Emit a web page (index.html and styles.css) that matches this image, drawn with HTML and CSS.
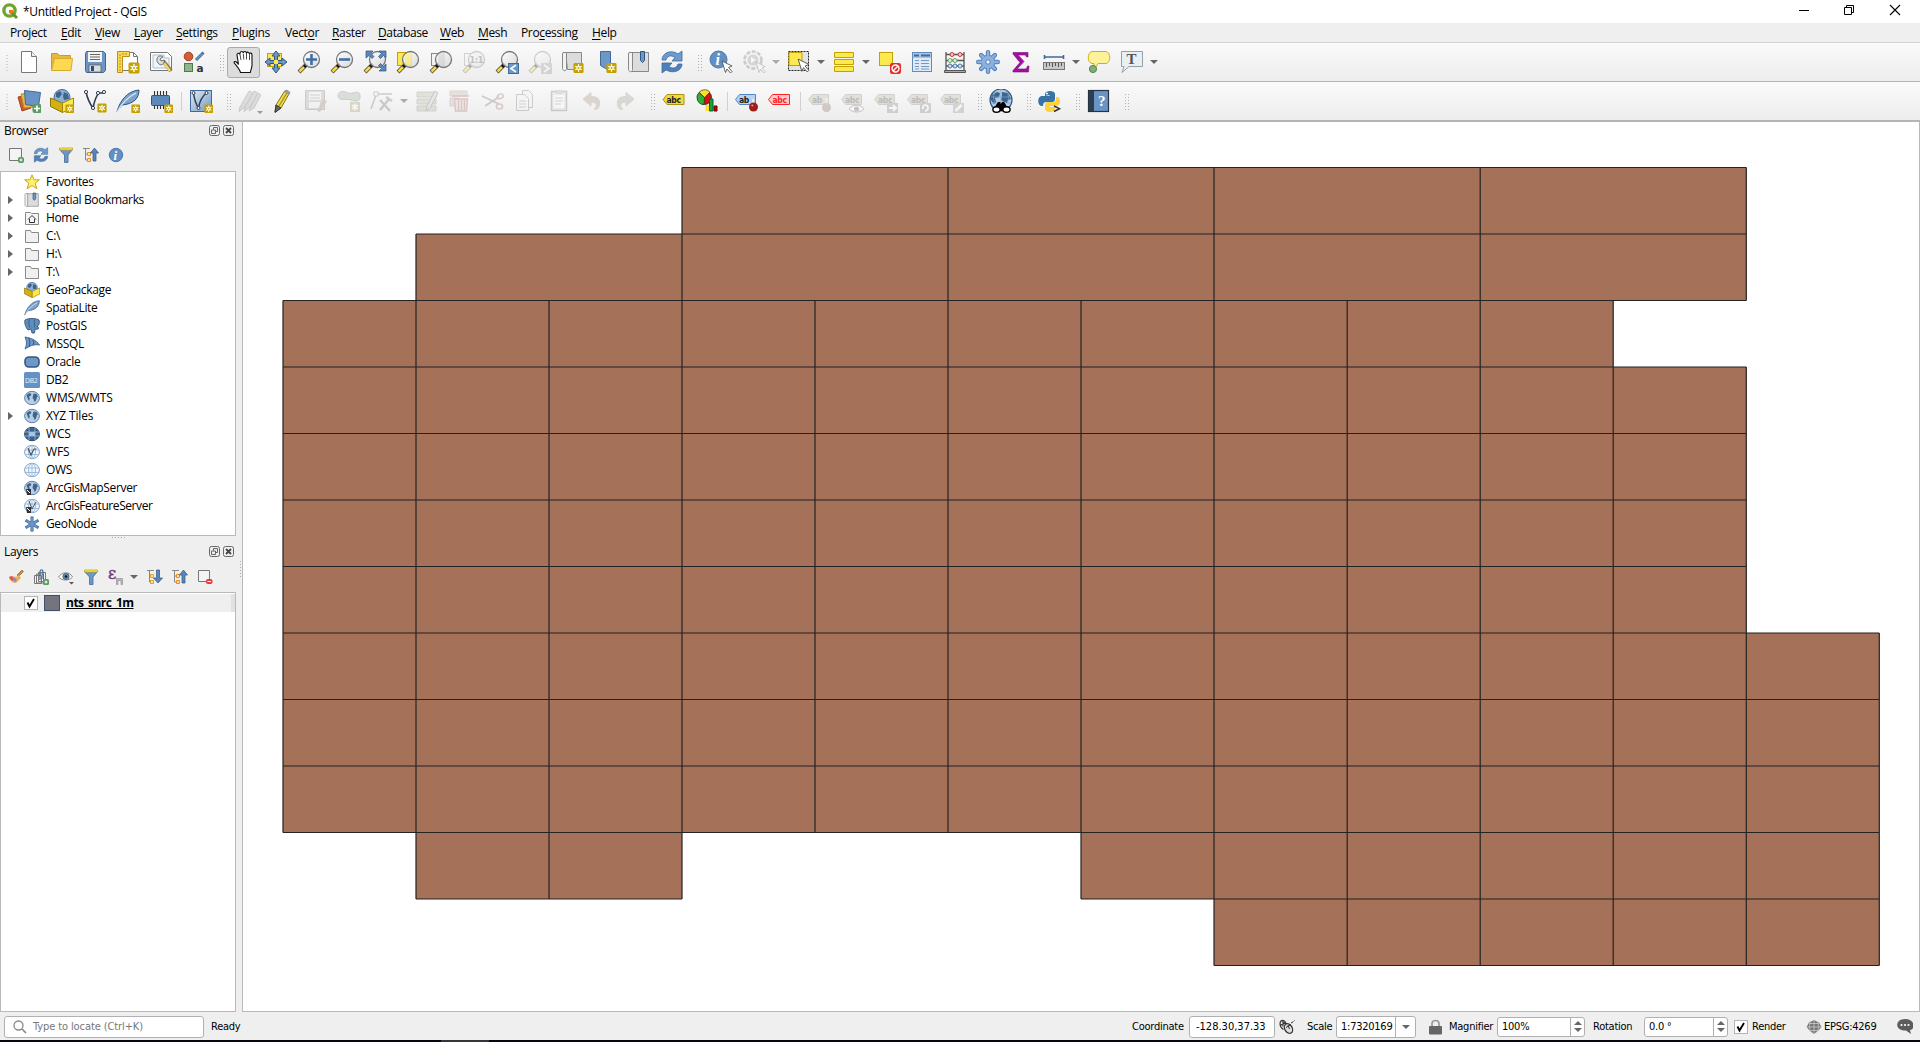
FILE: index.html
```html
<!DOCTYPE html>
<html lang="en">
<head>
<meta charset="utf-8">
<title>*Untitled Project - QGIS</title>
<link rel="stylesheet" href="styles.css">
</head>
<body>
<svg class="defs" width="0" height="0">
  <defs>
    <linearGradient id="gGlass" x1="0" y1="0" x2="1" y2="1"><stop offset="0" stop-color="#fff"/><stop offset="1" stop-color="#d4d6d4"/></linearGradient>
    <linearGradient id="gBlue" x1="0" y1="0" x2="1" y2="1"><stop offset="0" stop-color="#e4edf5"/><stop offset="1" stop-color="#6d97c4"/></linearGradient>
  </defs>
  <symbol id="star" viewBox="0 0 12 12"><rect x=".5" y=".5" width="11" height="11" rx="1.500" fill="#c4a000"/><path d="M6 2v8M2.500 4l7 4M9.500 4l-7 4" stroke="#fff" stroke-width="1.300"/><circle cx="6" cy="6" r="2.200" fill="#fff"/><circle cx="6" cy="6" r="1" fill="#c4a000"/></symbol>
  <symbol id="lens" viewBox="0 0 24 24"><path d="M2 22l7-7" stroke="#444" stroke-width="4"/><path d="M2.500 21.500l5-5" stroke="#fcd93a" stroke-width="2.500"/><path d="M7 17l3-3" stroke="#111" stroke-width="3"/><circle cx="14.500" cy="9.500" r="8" fill="url(#gGlass)" fill-opacity=".85" stroke="#777" stroke-width="1.300"/></symbol>
  <symbol id="new" viewBox="0 0 24 24"><path d="M4.500 1.500h10l5 5v16h-15z" fill="#fff" stroke="#777"/><path d="M14.500 1.500v5h5" fill="#eee" stroke="#777"/></symbol>
  <symbol id="open" viewBox="0 0 24 24"><path d="M1.500 20.500v-17h6l2 2h11v5" fill="#e8b73c" stroke="#c79b2c"/><path d="M1.500 20.500l3-12h18l-1.500 12z" fill="#fcd94e" stroke="#d8ab32"/></symbol>
  <symbol id="save" viewBox="0 0 24 24"><path d="M3.500 1.500h17l2 2v17l-2 2h-17l-1-2v-17z" fill="#6b96c5" stroke="#3f6797"/><rect x="5" y="2" width="14" height="10" fill="#f4f4f4"/><path d="M7 4.500h10M7 7h10M7 9.500h10" stroke="#666"/><rect x="6" y="15" width="12" height="7" fill="#ddd" stroke="#555" stroke-width=".7"/><rect x="8" y="16" width="3" height="5" fill="#446"/></symbol>
  <symbol id="layout" viewBox="0 0 24 24"><path d="M6.500 2.500h11l4 4v14h-15z" fill="#fff" stroke="#777"/><path d="M17.500 2.500v4h4" fill="none" stroke="#777"/><path d="M1.500 1.500h12v5h-7v16h-5z" fill="#fcd94e" stroke="#b98f1e"/><path d="M3 5h2M3 8h2M3 11h2M3 14h2M3 17h2M3 20h2M7 3v2M10 3v2" stroke="#b98f1e"/><use href="#star" x="12" y="12" width="12" height="12"/></symbol>
  <symbol id="layoutmgr" viewBox="0 0 24 24"><path d="M1.500 2.500h17l4 4v14h-21z" fill="#fff" stroke="#777"/><path d="M4 5h11v3h5v10H4z" fill="#eef4fa" stroke="#a5bfd8"/><path d="M14 11l8 10" stroke="#8a7a30" stroke-width="4"/><path d="M15 13l6 8" stroke="#f2d675" stroke-width="2.500"/><path d="M8 9c0-3 4-4 6-2l-3 2 1 2 3-1c1 4-3 6-5 4s-2-2-2-5z" fill="#ddd" stroke="#555" stroke-width=".8"/></symbol>
  <symbol id="style" viewBox="0 0 24 24"><circle cx="6.500" cy="6.500" r="4.300" fill="#d45c36" stroke="#9a4021"/><path d="M14 10l7.500-7.500" stroke="#41699b" stroke-width="3"/><path d="M14.500 9.500l6-6" stroke="#6d97c4" stroke-width="1.400"/><rect x="2.500" y="13.500" width="8" height="8" fill="#8fb38c" stroke="#4a7c46"/><text x="14.500" y="21.500" font-size="10.500" font-family="DejaVu Sans" fill="#333">a</text></symbol>
  <symbol id="hand" viewBox="0 0 24 24"><path d="M9.500 22.500c-1-4-5.500-8-6.500-10 .5-2 3-.5 4.500 2L6 5c0-2 2-2.500 3-.5V3c.5-2 3-2 3.300 0 .3-2 2.700-2 3.200 0 .5-1.500 2.500-1 3 .8.500-1.200 2.500-1 2.500 1.200V15c0 3-1 4-1.700 7.500z" fill="#fff" stroke="#111" stroke-width="1.100"/><path d="M9 4.500l1 5.500M12.300 3.500l.5 6M15.500 4v5.500M18.500 5v5" stroke="#333" stroke-width=".9"/></symbol>
  <symbol id="pansel" viewBox="0 0 24 24"><rect x="3.500" y="3.500" width="14" height="13" fill="#fce94f" stroke="#c4a000"/><path d="M12 1l4 5h-2.500v4.500H18V8l5 4-5 4v-2.500h-4.500V18H16l-4 5-4-5h2.500v-4.500H6V16l-5-4 5-4v2.500h4.500V6H8z" fill="#6d97c4" stroke="#2f5582"/><rect x="10" y="10" width="4" height="4" fill="#fce94f"/></symbol>
  <symbol id="zin" viewBox="0 0 24 24"><use href="#lens"/><path d="M14.500 4v11M9 9.500h11" stroke="#3f6ea8" stroke-width="2.600"/></symbol>
  <symbol id="zout" viewBox="0 0 24 24"><use href="#lens"/><path d="M9 9.500h11" stroke="#3f6ea8" stroke-width="2.600"/></symbol>
  <symbol id="zfull" viewBox="0 0 24 24"><use href="#lens"/><g fill="#5b87b8" stroke="#2f5582" stroke-width=".7"><path d="M3 1h7L8 3.500l3 3-2 2-3-3L3 8z"/><path d="M23 1v7l-2.500-2.500-3 3-2-2 3-3L16 1z"/><path d="M23 21h-7l2.500-2.500-3-3 2-2 3 3L23 14z"/></g></symbol>
  <symbol id="zsel" viewBox="0 0 24 24"><rect x="1.500" y="2.500" width="14" height="13" fill="#fce94f" stroke="#c4a000"/><use href="#lens"/><path d="M9 4h6v11H9z" fill="#fce94f" opacity=".45"/></symbol>
  <symbol id="zlay" viewBox="0 0 24 24"><rect x="2.500" y="3.500" width="13" height="12" fill="#f3f3f3" stroke="#888"/><use href="#lens"/><path d="M9 4h6v11H9z" fill="#ccc" opacity=".5"/></symbol>
  <symbol id="znat" viewBox="0 0 24 24"><rect x="2.500" y="3.500" width="13" height="12" fill="#f3f3f3" stroke="#888"/><use href="#lens"/><text x="7.500" y="13" font-size="9" font-weight="bold" font-family="DejaVu Sans Condensed" fill="#555">1:1</text></symbol>
  <symbol id="zlast" viewBox="0 0 24 24"><use href="#lens"/><rect x="13.500" y="13.500" width="10" height="10" fill="#6d97c4" stroke="#41699b"/><path d="M21 15l-5 3.500 5 3.500" fill="none" stroke="#fff" stroke-width="1.600"/></symbol>
  <symbol id="znext" viewBox="0 0 24 24"><use href="#lens"/><rect x="13" y="13" width="11" height="11" fill="#999"/><path d="M16 15l5 3.500-5 3.500" fill="none" stroke="#fff" stroke-width="1.600"/></symbol>
  <symbol id="newview" viewBox="0 0 24 24"><path d="M4.500 2.500h16v17h-14z" fill="#dcdcdc" stroke="#888"/><path d="M2 2.500h3.500v16c0 3-3.500 3-4 0V4z" fill="#f2f2f2" stroke="#888"/><use href="#star" x="12" y="12.500" width="11" height="11"/></symbol>
  <symbol id="newbm" viewBox="0 0 24 24"><path d="M6.500 1.500h10v20l-5-3-5-3z" fill="#6d97c4" stroke="#41699b"/><use href="#star" x="12" y="12.500" width="11" height="11"/></symbol>
  <symbol id="bm" viewBox="0 0 24 24"><path d="M4.500 2.500h17v19h-17z" fill="#dcdcdc" stroke="#888"/><path d="M2 2.500h3.500v17c0 3-3.500 3-4 0V4z" fill="#f2f2f2" stroke="#888"/><path d="M13.500 1.500h4v9l-2 2-2-2z" fill="#6d97c4" stroke="#2f5582"/></symbol>
  <symbol id="refresh" viewBox="0 0 24 24"><path d="M2 10C2 3 11-1 18 4l4-3v10H12l3-3.500C11 4.500 7 6 6 10z" fill="#6d9bd0" stroke="#41699b" stroke-width=".8"/><path d="M22 14c0 7-9 10-16 6l-4 3V13h10l-3 3.500c4 3 8 1 9-2.500z" fill="#4e80ba" stroke="#41699b" stroke-width=".8"/></symbol>
  <symbol id="cursor" viewBox="0 0 12 14"><path d="M1 1l10 5-3.500 1.500 3.500 4-1.500 1.500-3.500-4-1.500 3.500z" fill="#fff" stroke="#555" stroke-width=".9"/></symbol>
  <symbol id="ident" viewBox="0 0 24 24"><circle cx="9.500" cy="9.500" r="8.500" fill="#6290c4" stroke="#4a78ab"/><text x="6.500" y="15" font-size="16" font-weight="bold" font-style="italic" font-family="Liberation Serif" fill="#fff">i</text><use href="#cursor" x="12" y="10" width="12" height="14"/></symbol>
  <symbol id="action" viewBox="0 0 24 24"><circle cx="11" cy="10" r="8.500" fill="#eee" stroke="#777" stroke-width="2.500" stroke-dasharray="4 1.500"/><circle cx="11" cy="10" r="5.500" fill="#999"/><path d="M9 7l5 3-5 3z" fill="#fff"/><use href="#cursor" x="13" y="11" width="11" height="13"/></symbol>
  <symbol id="select" viewBox="0 0 24 24"><rect x="1.500" y="1.500" width="20" height="19" fill="#e4e4e4" stroke="#222" stroke-dasharray="2 1"/><path d="M2 2.500h13v13H2z" fill="#fce94f" stroke="#c4a000"/><use href="#cursor" x="10" y="8" width="13" height="15"/></symbol>
  <symbol id="selform" viewBox="0 0 24 24"><path d="M2.500 2.500h19v5h-19zM2.500 9.500h19v5h-19zM2.500 16.500h19v5h-19z" fill="#fce94f" stroke="#c4a000"/></symbol>
  <symbol id="desel" viewBox="0 0 24 24"><rect x="2.500" y="2.500" width="13" height="13" fill="#fce94f" stroke="#c4a000"/><rect x="13" y="13" width="11" height="11" rx="2" fill="#e02f2f"/><circle cx="18.500" cy="18.500" r="3.500" fill="none" stroke="#fff" stroke-width="1.400"/><path d="M16 21l5-5" stroke="#fff" stroke-width="1.400"/></symbol>
  <symbol id="table" viewBox="0 0 24 24"><rect x="2.500" y="2.500" width="19" height="19" fill="#dfeaf5" stroke="#5f8cbc"/><path d="M3 3h18v5H3z" fill="#a9c5e2"/><path d="M4 5.500h5M11 5.500h9" stroke="#41699b" stroke-width="2"/><path d="M5 10.500h4M5 13.500h4M5 16.500h4M5 19h4M11 10.500h8M11 13.500h8M11 16.500h8M11 19h8" stroke="#7199c4"/></symbol>
  <symbol id="abacus" viewBox="0 0 24 24"><path d="M3 2v18M21 2v18M3 4.500h18M3 10.500h18M3 16h18" stroke="#555" stroke-width="1.300"/><path d="M1.500 20.500h21v2h-21z" fill="#aaa" stroke="#555"/><g fill="#f3c4c4" stroke="#c93434"><circle cx="9" cy="4.500" r="2"/><circle cx="17" cy="4.500" r="2"/></g><g fill="#dff0df" stroke="#66a366"><circle cx="7" cy="10.500" r="2"/><circle cx="12" cy="10.500" r="2"/></g><g fill="#cfe0f2" stroke="#4a78ab"><circle cx="7" cy="16" r="2"/><circle cx="12" cy="16" r="2"/><circle cx="17" cy="16" r="2"/></g></symbol>
  <symbol id="gear" viewBox="0 0 24 24"><path d="M12 2.200v19.600M2.200 12h19.600M5.100 5.100l13.800 13.800M18.900 5.100L5.100 18.900" stroke="#4a7fbe" stroke-width="4.400" stroke-linecap="round"/><circle cx="12" cy="12" r="6.800" fill="#8db1dc" stroke="#4a7fbe"/><path d="M12 2.200v19.600M2.200 12h19.600M5.100 5.100l13.800 13.800M18.900 5.100L5.100 18.900" stroke="#8db1dc" stroke-width="2.500" stroke-linecap="round"/><circle cx="12" cy="12" r="2.200" fill="#f4f4f4" stroke="#4a7fbe"/></symbol>
  <symbol id="sigma" viewBox="0 0 24 24"><path d="M4 2.500h15v4.500h-1.500c-.5-2-1-2-3-2H9l6 6.500-7 7.500h7c2 0 3-.5 3.500-3H20l-.5 6H4v-1.500l7-8L4 4z" fill="#a3109f" stroke="#7b0a78" stroke-width=".6"/></symbol>
  <symbol id="measure" viewBox="0 0 24 24"><path d="M2 7h20M2.500 5v4M21.500 5v4" stroke="#41699b" stroke-width="1.600"/><rect x="1.500" y="12.500" width="21" height="7" fill="#c8c8c4" stroke="#777"/><path d="M4.500 13v4M7.500 13v3M10.500 13v4M13.500 13v3M16.500 13v4M19.500 13v3" stroke="#555"/></symbol>
  <symbol id="tip" viewBox="0 0 24 24"><path d="M5 1.500h14c5 1 5 11 0 12h-8l-4 6v-6H5c-5-1-5-11 0-12z" fill="#fcf29a" stroke="#cfae1b"/><circle cx="6" cy="19" r="3.600" fill="#7fae78" stroke="#55874e"/></symbol>
  <symbol id="anno" viewBox="0 0 24 24"><path d="M1.500 1.500h21v15H9l-7 6 2-6H1.500z" fill="#e9f0f4" stroke="#94a0a6"/><text x="6.500" y="14" font-size="15" font-family="Liberation Serif" font-weight="bold" fill="#555">T</text></symbol>
  <symbol id="dsm" viewBox="0 0 24 24"><path d="M1 8l10-2 3 13-9 3z" fill="#d0582e" stroke="#a34321"/><path d="M4 5l10-1 2 14-9 1z" fill="#e8b93c" stroke="#ba8f22"/><path d="M7.500 1.500l16 2-2 14-13-2z" fill="#6893c4" stroke="#41699b"/><rect x="15.500" y="15" width="9" height="9" rx="2" fill="#5a9a63"/><path d="M20 16.500v6M17 19.500h6" stroke="#fff" stroke-width="1.700"/></symbol>
  <symbol id="globe" viewBox="0 0 24 24"><circle cx="12" cy="12" r="10.800" fill="#b6cce4" stroke="#5b82ae" stroke-width="1.200"/><path d="M4 7l4-3 3 1.500-1.500 3-2.500 1 1.500 3-1 4-2.500-5zM14 5l4 .5 3 4-2 1.500-1 5-2.500 2-1.500-4-2-2 1-3.500z" fill="#3d648f"/></symbol>
  <symbol id="gpkg" viewBox="0 0 24 24"><circle cx="12" cy="8.500" r="8" fill="#8eb0d4" stroke="#41699b"/><path d="M6 4l4-2 2 3-3 4-3-1zM14 3l4 2 1 5-5 1-1-4z" fill="#3d648f"/><path d="M.5 9l12 5v9.500l-12-6z" fill="#d4b012" stroke="#8d7400"/><path d="M12.500 14l11-5v9l-11 5.500z" fill="#fce94f" stroke="#a58900"/></symbol>
  <symbol id="gpkgn" viewBox="0 0 24 24"><use href="#gpkg"/><use href="#star" x="15" y="15" width="9.500" height="9.500"/></symbol>
  <symbol id="vshape" viewBox="0 0 24 24"><path d="M3 3c2 9 4 12 7 16 1-5 3-12 6-15h5" fill="none" stroke="#2f3f52" stroke-width="1.600"/><g fill="#fff" stroke="#2f3f52"><circle cx="3" cy="3" r="1.600"/><circle cx="10" cy="19" r="1.600"/><circle cx="15" cy="4" r="1.600"/><circle cx="21" cy="3" r="1.600"/></g></symbol>
  <symbol id="shp" viewBox="0 0 24 24"><use href="#vshape"/><use href="#star" x="14" y="14" width="10" height="10"/></symbol>
  <symbol id="feather" viewBox="0 0 24 24"><path d="M1 22.500C4 12 11 2 23 1c0 8-5 14-17 15z" fill="#7da2cb" stroke="#2f5582"/><path d="M1 23C6 14 12 8 20 4" fill="none" stroke="#dfe9f3" stroke-width="1.200"/></symbol>
  <symbol id="spl" viewBox="0 0 24 24"><use href="#feather"/><use href="#star" x="15" y="15" width="9.500" height="9.500"/></symbol>
  <symbol id="chip" viewBox="0 0 24 24"><path d="M5.500 2v18M8.500 2v18M11.500 2v18M14.500 2v18M17.500 2v18" stroke="#333" stroke-width="1.100"/><rect x="2.500" y="6.500" width="18" height="10" rx="1" fill="#5c89bc" stroke="#2f5582"/><use href="#star" x="15" y="15" width="9.500" height="9.500"/></symbol>
  <symbol id="virt" viewBox="0 0 24 24"><rect x="1.500" y="1.500" width="21" height="21" fill="url(#gBlue)" stroke="#41699b"/><path d="M4.500 4c1 8 3 12 5 15 1-6 4-12 8-15" fill="none" stroke="#2f3f52" stroke-width="1.500"/><g fill="#fff" stroke="#2f3f52"><circle cx="4.500" cy="4" r="1.500"/><circle cx="17.500" cy="4" r="1.500"/><circle cx="9.500" cy="19" r="1.500"/></g><use href="#star" x="15" y="15" width="9.500" height="9.500"/></symbol>
  <symbol id="pencil" viewBox="0 0 24 24"><path d="M5 16L14 1.500l4.500 2.500L10 19l-6 4z" fill="#f0dc4a" stroke="#857314"/><path d="M8 17L16.500 3" stroke="#a8921c" stroke-width="1.300"/><path d="M5 16l5 3-6 4.500z" fill="#666" stroke="#333"/><path d="M13 3l5 3 1.500-3-4-2.500z" fill="#9a9a9a"/></symbol>
  <symbol id="pencils" viewBox="0 0 24 24"><path d="M2 18L11 2l4 2-8 14-6 4.500zM7 18l9-16 4 2-8 14-6 4.500zM12 19l8-15 3 2-7 13-5 3z" fill="#aaa" stroke="#777"/></symbol>
  <symbol id="savee" viewBox="0 0 24 24"><path d="M1.500 1.500h19v19h-19z" fill="#aaa" stroke="#777"/><rect x="5" y="3" width="12" height="8" fill="#eee"/><path d="M6 6h10M6 9h10" stroke="#888"/><rect x="5" y="13" width="11" height="6" fill="#eee"/><path d="M13 22l6-12 4 2-7 11z" fill="#a87c70"/></symbol>
  <symbol id="poly" viewBox="0 0 24 24"><path d="M1 7c1-6 6-5 10-3s11-4 12 2-3 7-9 5-12 2-13-4z" fill="#9cb09c" stroke="#777"/><rect x="13" y="13" width="10" height="10" fill="#a59c66"/><path d="M18 14.500v7M15 16l6 4M21 16l-6 4" stroke="#fff" stroke-width="1.600"/></symbol>
  <symbol id="vertex" viewBox="0 0 24 24"><path d="M1 20L6 6M7 5h15" stroke="#777" stroke-width="1.500"/><rect x="4" y="3" width="4" height="4" fill="#fff" stroke="#777"/><path d="M10 11l10 11M19 10L10 21M16 8l6 4" stroke="#777" stroke-width="2.500"/></symbol>
  <symbol id="multi" viewBox="0 0 24 24"><path d="M2 3h19v5H2zM2 10h19v5H2zM2 17h19v5H2z" fill="#b9b99a" stroke="#888"/><path d="M11 22l1-5 8-15 3 2-8 15z" fill="#ccc" stroke="#666"/></symbol>
  <symbol id="del" viewBox="0 0 24 24"><path d="M2 2h17v5H2zM2 9h9v8H2z" fill="#c8b8a8" stroke="#999"/><path d="M4 7h17M6.500 10h13l-1 12h-11zM10.500 11v10M13.500 11v10M16.500 11v10" fill="#dcc" stroke="#a66" stroke-width="1.300"/></symbol>
  <symbol id="cut" viewBox="0 0 24 24"><path d="M1 7l17 8M4 17L18 8" stroke="#777" stroke-width="1.700"/><ellipse cx="18.500" cy="17.500" rx="3" ry="2.500" fill="none" stroke="#a77" stroke-width="1.600"/><ellipse cx="19.500" cy="7.500" rx="3" ry="2.200" fill="none" stroke="#a77" stroke-width="1.600" transform="rotate(-20 19 8)"/></symbol>
  <symbol id="copy" viewBox="0 0 24 24"><path d="M8.500 1.500h6l4 4v13h-10z" fill="#f6f6f6" stroke="#777"/><path d="M2.500 5.500h8l4 4v12h-12z" fill="#f6f6f6" stroke="#777"/><path d="M5 12h7M5 15h7M5 18h7" stroke="#888"/></symbol>
  <symbol id="paste" viewBox="0 0 24 24"><rect x="4.500" y="2.500" width="15" height="19" fill="#ddd" stroke="#777" stroke-width="1.500"/><rect x="7" y="6" width="10" height="13" fill="#fff"/><rect x="8" y="1" width="8" height="4" fill="#aaa"/><path d="M8 9h8M8 12h8M8 15h6" stroke="#888"/></symbol>
  <symbol id="undo" viewBox="0 0 24 24"><path d="M3 10l8-6.500v4c7 0 10 3 8 10-1 3-3 3-5 3 4-3 3-7.500-3-7.500v4z" fill="#a89484" stroke="#998"/></symbol>
  <symbol id="redo" viewBox="0 0 24 24"><path d="M21 10l-8-6.500v4c-7 0-10 3-8 10 1 3 3 3 5 3-4-3-3-7.500 3-7.500v4z" fill="#94a494" stroke="#998"/></symbol>
  <symbol id="abc" viewBox="0 0 24 24"><path d="M1.500 11.500l4-5h17v10h-17z" fill="#f2d93b" stroke="#b0920f" transform="translate(-.5 -1)"/><text x="4.500" y="13.500" class="ico-t" fill="#222">abc</text></symbol>
  <symbol id="diag" viewBox="0 0 24 24"><circle cx="9.500" cy="8.500" r="7" fill="#d41010" stroke="#222" stroke-width=".8"/><path d="M9.500 8.500L4 3.500a7.200 7.200 0 0 1 11-.5z" fill="#fbe02a" stroke="#222" stroke-width=".6"/><path d="M9.500 8.500L4 3.500a7 7 0 0 0 5 12z" fill="#2fae3a" stroke="#222" stroke-width=".6"/><path d="M10.500 16h3.500v6h-3.500z" fill="#fbe02a"/><path d="M14.500 10h3.500v12h-3.500z" fill="#1ea02e" stroke="#064"/><path d="M19 17h3v5h-3z" fill="#c00" stroke="#600"/></symbol>
  <symbol id="abpin" viewBox="0 0 24 24"><path d="M.5 10.500l4-5h16v10h-16z" fill="#b9d3ef" stroke="#4d86c6"/><text x="4" y="13.500" class="ico-t" fill="#222">ab</text><path d="M18 10v6" stroke="#eee" stroke-width="2"/><circle cx="18.500" cy="18" r="4.500" fill="#a31c1c"/><circle cx="17.300" cy="16.500" r="1" fill="#e99"/></symbol>
  <symbol id="abcred" viewBox="0 0 24 24"><path d="M.5 10.500l4-5h17v10h-17z" fill="#ffc9c9" stroke="#f22"/><text x="4.500" y="13.500" class="ico-t" fill="#f22">abc</text></symbol>
  <symbol id="gtag" viewBox="0 0 24 24"><path d="M.5 10.500l4-5h16v10h-16z" fill="#bdb9a0" stroke="#888"/><text x="4" y="13.500" class="ico-t" fill="#444">abc</text></symbol>
  <symbol id="g1" viewBox="0 0 24 24"><path d="M.5 10.500l4-5h16v10h-16z" fill="#bdb9a0" stroke="#888"/><text x="4" y="13.500" class="ico-t" fill="#444">ab</text><path d="M17 9h3v8h-3z" fill="#ddd"/><circle cx="18.500" cy="18.500" r="4.500" fill="#876"/></symbol>
  <symbol id="g2" viewBox="0 0 24 24"><use href="#gtag"/><path d="M8 20c3-5 12-5 15 0-3 4-12 4-15 0z" fill="#fff" stroke="#666"/><circle cx="15.500" cy="20" r="2.500" fill="#666"/></symbol>
  <symbol id="g3" viewBox="0 0 24 24"><use href="#gtag"/><rect x="13" y="14" width="11" height="10" fill="#888"/><path d="M15 19h7M19 16l3 3-3 3" fill="none" stroke="#fff" stroke-width="2"/></symbol>
  <symbol id="g4" viewBox="0 0 24 24"><use href="#gtag"/><rect x="13" y="14" width="11" height="10" fill="#888"/><path d="M16 20c-1-5 5-5 5-1.500S18 22 18 22" fill="none" stroke="#fff" stroke-width="1.800"/></symbol>
  <symbol id="g5" viewBox="0 0 24 24"><use href="#gtag"/><rect x="13" y="14" width="11" height="10" fill="#998"/><path d="M15.500 22l6-6" stroke="#fff" stroke-width="2.500"/></symbol>
  <symbol id="meta" viewBox="0 0 24 24"><circle cx="12" cy="11" r="11" fill="#b6cce4" stroke="#34587f" stroke-width="1.200"/><path d="M3 6l5-3 3 1-1 4-4 1 1 4-2 2-4-5zM13 3l6 1 3 6-3 1-1 3-3-1-3-2 1-4z" fill="#3d648f"/><path d="M2 8h20M2 14h20M12 0v14M7 1c-3 4-3 10-1 13M17 1c3 4 3 10 1 13" fill="none" stroke="#7fa3cc" stroke-width=".7"/><path d="M5 19l4-6h2l1 2 1-2h2l4 6v3H5z" fill="#000"/><g fill="#fff" stroke="#000" stroke-width="1.400"><ellipse cx="7.500" cy="20.500" rx="3.600" ry="2.800"/><ellipse cx="17.500" cy="20.500" rx="3.600" ry="2.800"/></g></symbol>
  <symbol id="py" viewBox="0 0 24 24"><path d="M7 7V5c0-4 10-4 10 0v5c0 2-1 3-3 3H8c-2 0-3 1-3 4H4c-5 0-5-10 0-10h7.500V6z" fill="#3873a6"/><path d="M18 8h1c4 0 4 8 0 9h-7v1h5v2c0 4-10 4-10 0v-4c0-2 1-3 3-3h5c2 0 3-1 3-3z" fill="#fcd23e"/><circle cx="9" cy="4.500" r="1" fill="#fff"/><path d="M16 17l5.500 2.700L16 22.500" fill="none" stroke="#333" stroke-width="1.500"/></symbol>
  <symbol id="help" viewBox="0 0 24 24"><rect x="1.500" y="1.500" width="20" height="21" fill="#6a94c6" stroke="#263442" stroke-width="1.200"/><path d="M2 2h5v20H2z" fill="#2c3f50"/><text x="11" y="17" font-size="15" font-family="Liberation Serif" fill="#fff">?</text></symbol>
  <symbol id="addl" viewBox="0 0 16 16"><path d="M1.500 1.500h12v12h-12z" fill="#f4f4f4" stroke="#777"/><rect x="10" y="10" width="6" height="6" rx="2" fill="#5a9a63"/><path d="M13 11.500v3M11.500 13h3" stroke="#fff"/></symbol>
  <symbol id="filter" viewBox="0 0 16 16"><path d="M1.500 2.500h13L10 8v7.500H6.500V8z" fill="#6d97c4" stroke="#41699b" stroke-width=".8"/><path d="M1.500 1h13v2h-13z" fill="#fce94f" stroke="#c4a000" stroke-width=".7"/></symbol>
  <symbol id="coll" viewBox="0 0 16 16"><path d="M0 1.500h7M2.500 2v11h4M2.500 7h4" fill="none" stroke="#888"/><path d="M4.500 5.500h3v3h-3zM4.500 11.500h3v3h-3z" fill="#fde0b0" stroke="#f08a1c"/><path d="M11.500 1l4 5h-2.500v8h-3V6H7.500z" fill="#5b87b8" stroke="#2f5582" stroke-width=".7"/></symbol>
  <symbol id="expd" viewBox="0 0 16 16"><path d="M0 1.500h7M2.500 2v11h4M2.500 7h4" fill="none" stroke="#888"/><path d="M3.500 5.500h3v3h-3zM3.500 11.500h3v3h-3z" fill="#fde0b0" stroke="#e0a01c"/><path d="M11 14l4.500-5H12.500V1h-3v8H6.500z" fill="#5b87b8" stroke="#2f5582" stroke-width=".7"/></symbol>
  <symbol id="info" viewBox="0 0 16 16"><circle cx="8" cy="8" r="6.700" fill="#6290c4" stroke="#4a78ab"/><text x="5.500" y="12.500" font-size="13" font-weight="bold" font-style="italic" font-family="Liberation Serif" fill="#fff">i</text></symbol>
  <symbol id="fav" viewBox="0 0 16 16"><path d="M8 .8l2.100 5h5.300l-4.200 3.400 1.700 5.600L8 11.600l-4.900 3.200 1.700-5.600L.6 5.800h5.300z" fill="#fdf06a" stroke="#c9a81a"/></symbol>
  <symbol id="folder" viewBox="0 0 16 16"><path d="M1.500 2.500h5l1 2h7v10h-13z" fill="#f0f0f0" stroke="#888"/></symbol>
  <symbol id="home" viewBox="0 0 16 16"><path d="M1.500 3.500v-1h5l1 1h7v11h-13z" fill="#f4f4f4" stroke="#888"/><path d="M4 9.500l4-4 4 4M5.500 9v3.500h5V9" fill="none" stroke="#333"/></symbol>
  <symbol id="pg" viewBox="0 0 16 16"><path d="M1 2c3-2 11-2 14 0 1 3 0 5-2 7l2 1c-1 1.500-3 1.500-4 1l-.5 4H8l-1-4-3 1C2 10 0 5 1 2z" fill="#5f8bbd" stroke="#34587f" stroke-width=".9"/><path d="M5.500 1.500c-1 3-1 5 .5 8M10.500 1.500c-1 3 1 5 0 8" fill="none" stroke="#34587f" stroke-width=".9"/></symbol>
  <symbol id="ms" viewBox="0 0 16 16"><path d="M1 1c6 1 11 3 14.500 8-6-1-10 1-14.500 4 2-4 2-8 0-12z" fill="#6d97c4" stroke="#41699b"/><path d="M5 2c1 4 1 6 0 9M9 4c1 2 1 4 0 5" fill="none" stroke="#2f5582"/></symbol>
  <symbol id="ora" viewBox="0 0 16 16"><rect x="1" y="3" width="14" height="10" rx="4" fill="#6d97c4" stroke="#34587f" stroke-width="1.600"/></symbol>
  <symbol id="db2" viewBox="0 0 16 16"><rect width="16" height="16" rx="1.500" fill="#6592c4"/><text x="1" y="10.500" font-size="6.500" font-family="DejaVu Sans" fill="#e8eff7">DB2</text></symbol>
  <symbol id="wcs" viewBox="0 0 16 16"><ellipse cx="8" cy="8" rx="7.400" ry="6.700" fill="#3d648f" stroke="#2c4a6c"/><path d="M5 6h6v4H5z" fill="#a9c8e8"/><path d="M1 6h14M1 10h14M5 2v12M11 2v12" stroke="#9cb9d8" stroke-width=".8"/></symbol>
  <symbol id="ows" viewBox="0 0 16 16"><ellipse cx="8" cy="8" rx="7.400" ry="6.700" fill="#f4f8fc" stroke="#7ea3cc"/><ellipse cx="8" cy="8" rx="3.500" ry="6.500" fill="none" stroke="#9dbbdc"/><path d="M1 6h14M1 10.500h14M8 1.500v13" stroke="#9dbbdc"/></symbol>
  <symbol id="wfs" viewBox="0 0 16 16"><use href="#ows"/><path d="M4 4l3 7 3-6h2.500" fill="none" stroke="#456" stroke-width="1.200"/></symbol>
  <symbol id="globes" viewBox="0 0 16 16"><ellipse cx="8" cy="8" rx="7.400" ry="6.700" fill="#b9cee5" stroke="#5b82ae"/><path d="M2.500 5l3-2 2 1-1 2-1.500.5.800 2-.8 2.500L3.500 8zM9.500 3.500l3 .5 1.500 2.500-1 .5-1 3.500-1.500 1.500-1-3-1-1 .5-2.500z" fill="#3d648f"/></symbol>
  <symbol id="arcm" viewBox="0 0 16 16"><use href="#globes"/><path d="M2 9h5v6H3z" fill="#333"/><path d="M3 10l3 3" stroke="#fff"/></symbol>
  <symbol id="arcf" viewBox="0 0 16 16"><use href="#ows"/><path d="M5 3l3 8 4-7" fill="none" stroke="#456"/><path d="M2 9h5v6H3z" fill="#333"/><path d="M3 10l3 3" stroke="#fff"/></symbol>
  <symbol id="gnode" viewBox="0 0 16 16"><path d="M8 .5v15M1.500 4.200l13 7.600M14.500 4.200l-13 7.600" stroke="#41699b" stroke-width="3"/><path d="M8 1.500v13M2.400 4.800l11.200 6.400M13.600 4.800L2.400 11.200" stroke="#6d97c4" stroke-width="1.700"/></symbol>
  <symbol id="brush" viewBox="0 0 16 16"><path d="M9 6l5-5 1.500 1.500-5 5z" fill="#c58a3a" stroke="#8a5a1c" stroke-width=".6"/><path d="M1 8l3-1 4 1 3-2 2 3-5 5c-3 0-6-2-7-6z" fill="#f0b050"/><path d="M1 8l3-1 2 3-1 2c-2-1-3-2-4-4z" fill="#d55"/><path d="M6 8l3 3-2 2-2-2z" fill="#8f88d0"/></symbol>
  <symbol id="addg" viewBox="0 0 16 16"><path d="M5.500 3.500h7v9h-7zM3.500 5h7v9h-7zM1.500 6.500h7v8h-7z" fill="#f4f4f4" stroke="#777"/><path d="M7 11V3c0-3 3-3 3 0v7" fill="none" stroke="#41699b" stroke-width="1.200"/><rect x="10" y="10" width="6" height="6" rx="1.500" fill="#5a9a63"/><path d="M13 11.500v3M11.500 13h3" stroke="#fff"/></symbol>
  <symbol id="eye" viewBox="0 0 16 16"><path d="M.5 8c3-5 11-6 14 0-3 4-11 4-14 0z" fill="#fff" stroke="#888"/><circle cx="8" cy="7.500" r="3.200" fill="#5b87b8" stroke="#666" stroke-width=".8"/><circle cx="8" cy="7.500" r="1.200" fill="#111"/><path d="M11 13h5l-2.500 2.500z" fill="#555"/></symbol>
  <symbol id="eps" viewBox="0 0 16 16"><text x="0" y="9.500" font-size="16" font-family="DejaVu Serif" fill="#6b3a78" stroke="#6b3a78" stroke-width=".4">ε</text><path d="M8.500 15.500V9.500h6v6H13v-4h-3v4z" fill="#bbb" stroke="#888" stroke-width=".6"/></symbol>
  <symbol id="rml" viewBox="0 0 16 16"><path d="M1.500 1.500h11v11h-11z" fill="#f4f4f4" stroke="#777"/><rect x="9" y="10" width="6.500" height="5" rx="2" fill="#e23b3b"/><path d="M10.500 12.500h3.500" stroke="#fff"/></symbol>
</svg>

<header class="titlebar">
  <svg class="logo" viewBox="0 0 16 16"><circle cx="7.500" cy="7.500" r="5.600" fill="none" stroke="#6fa52f" stroke-width="3.400"/><path d="M8 8l7 7" stroke="#589632" stroke-width="3"/><path d="M7 7h4v3l-2 1-2-1z" fill="#ee7913"/></svg>
  <span class="title">*Untitled Project - QGIS</span>
  <svg class="wctl" width="110" height="12" viewBox="0 0 110 12"><path d="M0 6.500h10" stroke="#000"/><path d="M45.500 3.500h7v7h-7zM47.500 3.500v-2h7v7h-2" fill="none" stroke="#000"/><path d="M91 1l10 10M101 1L91 11" stroke="#000" stroke-width="1.100"/></svg>
</header>
<nav class="menubar">
  <span>Pro<u>j</u>ect</span><span><u>E</u>dit</span><span><u>V</u>iew</span><span><u>L</u>ayer</span><span><u>S</u>ettings</span><span><u>P</u>lugins</span><span>Vect<u>o</u>r</span><span><u>R</u>aster</span><span><u>D</u>atabase</span><span><u>W</u>eb</span><span><u>M</u>esh</span><span>Pro<u>c</u>essing</span><span><u>H</u>elp</span>
</nav>
<div class="toolbar">
  <i class="grip first"></i>
  <b><svg><use href="#new"/></svg></b><b><svg><use href="#open"/></svg></b><b><svg><use href="#save"/></svg></b><b><svg><use href="#layout"/></svg></b><b><svg><use href="#layoutmgr"/></svg></b><b><svg><use href="#style"/></svg></b>
  <i class="grip"></i>
  <b class="on"><svg><use href="#hand"/></svg></b><b><svg><use href="#pansel"/></svg></b><b><svg><use href="#zin"/></svg></b><b><svg><use href="#zout"/></svg></b><b><svg><use href="#zfull"/></svg></b><b><svg><use href="#zsel"/></svg></b><b><svg><use href="#zlay"/></svg></b><b class="off"><svg><use href="#znat"/></svg></b><b><svg><use href="#zlast"/></svg></b><b class="off"><svg><use href="#znext"/></svg></b><b><svg><use href="#newview"/></svg></b><b><svg><use href="#newbm"/></svg></b><b><svg><use href="#bm"/></svg></b><b><svg><use href="#refresh"/></svg></b>
  <i class="grip"></i>
  <b><svg><use href="#ident"/></svg></b><b class="off"><svg><use href="#action"/></svg></b><i class="drop dim"></i>
  <b><svg><use href="#select"/></svg></b><i class="drop"></i><b><svg><use href="#selform"/></svg></b><i class="drop"></i>
  <b><svg><use href="#desel"/></svg></b><b><svg><use href="#table"/></svg></b><b><svg><use href="#abacus"/></svg></b><b><svg><use href="#gear"/></svg></b><b><svg><use href="#sigma"/></svg></b><b><svg><use href="#measure"/></svg></b><i class="drop"></i>
  <b><svg><use href="#tip"/></svg></b><b><svg><use href="#anno"/></svg></b><i class="drop"></i>
</div>
<div class="toolbar second">
  <i class="grip first"></i>
  <b><svg><use href="#dsm"/></svg></b><b><svg><use href="#gpkgn"/></svg></b><b><svg><use href="#shp"/></svg></b><b><svg><use href="#spl"/></svg></b><b><svg><use href="#chip"/></svg></b><i class="sep"></i><b><svg><use href="#virt"/></svg></b>
  <i class="grip"></i>
  <b class="off"><svg><use href="#pencils"/></svg><i class="corner"></i></b><b><svg><use href="#pencil"/></svg></b><b class="off"><svg><use href="#savee"/></svg></b><b class="off"><svg><use href="#poly"/></svg></b><b class="off"><svg><use href="#vertex"/></svg></b><i class="drop dim"></i>
  <b class="off"><svg><use href="#multi"/></svg></b><b class="off"><svg><use href="#del"/></svg></b><b class="off"><svg><use href="#cut"/></svg></b><b class="off"><svg><use href="#copy"/></svg></b><b class="off"><svg><use href="#paste"/></svg></b><b class="off"><svg><use href="#undo"/></svg></b><b class="off"><svg><use href="#redo"/></svg></b>
  <i class="grip"></i>
  <b><svg><use href="#abc"/></svg></b><b><svg><use href="#diag"/></svg></b><i class="sep"></i><b><svg><use href="#abpin"/></svg></b><b><svg><use href="#abcred"/></svg></b><i class="sep"></i>
  <b class="off"><svg><use href="#g1"/></svg></b><b class="off"><svg><use href="#g2"/></svg></b><b class="off"><svg><use href="#g3"/></svg></b><b class="off"><svg><use href="#g4"/></svg></b><b class="off"><svg><use href="#g5"/></svg></b>
  <i class="grip"></i><b><svg><use href="#meta"/></svg></b>
  <i class="grip"></i><b><svg><use href="#py"/></svg></b>
  <i class="grip"></i><b><svg><use href="#help"/></svg></b>
  <i class="grip"></i>
</div>

<main class="work">
  <aside class="docks">
    <section class="dock">
      <div class="dock-head"><span>Browser</span>
        <svg width="26" height="12" viewBox="0 0 26 12"><g fill="none" stroke="#666"><rect x=".5" y=".5" width="10" height="10" rx="2"/><path d="M2.500 5h4v3.500h-4zM4.500 4.500v-2h4v4h-2"/><rect x="14.500" y=".5" width="10" height="10" rx="2"/><path d="M17 3l5 5M22 3l-5 5" stroke="#444" stroke-width="1.800"/></g></svg></div>
      <div class="dock-tools"><svg><use href="#addl"/></svg><svg><use href="#refresh"/></svg><svg><use href="#filter"/></svg><svg><use href="#coll"/></svg><svg><use href="#info"/></svg></div>
      <ul class="tree">
        <li><svg><use href="#fav"/></svg>Favorites</li>
        <li class="exp"><svg><use href="#bm"/></svg>Spatial Bookmarks</li>
        <li class="exp"><svg><use href="#home"/></svg>Home</li>
        <li class="exp"><svg><use href="#folder"/></svg>C:\</li>
        <li class="exp"><svg><use href="#folder"/></svg>H:\</li>
        <li class="exp"><svg><use href="#folder"/></svg>T:\</li>
        <li><svg><use href="#gpkg"/></svg>GeoPackage</li>
        <li><svg><use href="#feather"/></svg>SpatiaLite</li>
        <li><svg><use href="#pg"/></svg>PostGIS</li>
        <li><svg><use href="#ms"/></svg>MSSQL</li>
        <li><svg><use href="#ora"/></svg>Oracle</li>
        <li><svg><use href="#db2"/></svg>DB2</li>
        <li class="wide"><svg><use href="#globes"/></svg>WMS/WMTS</li>
        <li class="exp wide"><svg><use href="#globes"/></svg>XYZ Tiles</li>
        <li class="wide"><svg><use href="#wcs"/></svg>WCS</li>
        <li class="wide"><svg><use href="#wfs"/></svg>WFS</li>
        <li><svg><use href="#ows"/></svg>OWS</li>
        <li><svg><use href="#arcm"/></svg>ArcGisMapServer</li>
        <li class="tight"><svg><use href="#arcf"/></svg>ArcGisFeatureServer</li>
        <li><svg><use href="#gnode"/></svg>GeoNode</li>
      </ul>
    </section>
    <div class="hsplit"></div>
    <section class="dock layers">
      <div class="dock-head"><span>Layers</span>
        <svg width="26" height="12" viewBox="0 0 26 12"><g fill="none" stroke="#666"><rect x=".5" y=".5" width="10" height="10" rx="2"/><path d="M2.500 5h4v3.500h-4zM4.500 4.500v-2h4v4h-2"/><rect x="14.500" y=".5" width="10" height="10" rx="2"/><path d="M17 3l5 5M22 3l-5 5" stroke="#444" stroke-width="1.800"/></g></svg></div>
      <div class="dock-tools"><svg><use href="#brush"/></svg><svg><use href="#addg"/></svg><svg><use href="#eye"/></svg><svg><use href="#filter"/></svg><svg><use href="#eps"/></svg><i class="drop"></i><svg><use href="#expd"/></svg><svg><use href="#coll"/></svg><svg><use href="#rml"/></svg></div>
      <div class="tree layer-tree">
        <div class="layer"><svg class="check" viewBox="0 0 14 14"><rect x=".5" y=".5" width="13" height="13" fill="#fff" stroke="#b4b4b4"/><path d="M3.500 6.500l2 4 4.500-7.500" fill="none" stroke="#000" stroke-width="1.900"/></svg><span class="swatch"></span><span class="layer-name">nts_snrc_1m</span></div>
      </div>
    </section>
  </aside>
  <div class="vsplit"></div>
  <section class="canvas">
    <svg width="1676" height="889" viewBox="243 122 1676 889">
      <path fill="#a57158" d="M682 167.500H1746.300V300.500H1613.300V367H1746.300V633H1879.300V965.500H1214V899H1081V832.500H682V899H416V832.500H283V300.500H416V234H682z"/>
      <path fill="none" stroke="#232323" stroke-width="1.200" d="M682 167.500H1746.300M416 234H1746.300M283 300.500H1746.300M283 367H1746.300M283 433.500H1746.300M283 500H1746.300M283 566.500H1746.300M283 633H1879.300M283 699.500H1879.300M283 766H1879.300M283 832.500H1879.300M416 899H682M1081 899H1879.300M1214 965.500H1879.300M283 300.500V832.500M416 234V899M549 300.500V899M682 167.500V899M815 300.500V832.500M948 167.500V832.500M1081 300.500V899M1214 167.500V965.500M1347.200 300.500V965.500M1480.200 167.500V965.500M1613.200 300.500V965.500M1746.300 167.500V300.500M1746.300 367V965.500M1879.300 633V965.500"/>
    </svg>
  </section>
</main>

<footer class="status">
  <div class="field locate"><svg width="14" height="14" viewBox="0 0 14 14"><circle cx="5.500" cy="5.500" r="4.500" fill="none" stroke="#888" stroke-width="1.300"/><path d="M9 9l4 4" stroke="#888" stroke-width="1.700"/></svg><span>Type to locate (Ctrl+K)</span></div>
  <span class="ready">Ready</span>
  <span class="lbl">Coordinate</span>
  <div class="field coord">-128.30,37.33</div>
  <svg class="mouse" width="16" height="16" viewBox="0 0 16 16"><path d="M1.500 2.500c2-2 4-1 5 1l2 3M1.500 2.500c-1 3 0 6 3 8M4 1.500v6M2 6l5-3" fill="none" stroke="#333" stroke-width="1.200"/><ellipse cx="9.500" cy="9.500" rx="3.700" ry="5.200" transform="rotate(-30 9.500 9.500)" fill="#ddd" stroke="#333" stroke-width="1.300"/><path d="M7 8.500l5-3M9 6l1.500 4M12 4l2-1M14.500 2.500l1-1" stroke="#333"/></svg>
  <span class="lbl">Scale</span>
  <div class="field scale"><span>1:7320169</span><em><i class="drop"></i></em></div>
  <svg class="lock" width="13" height="16" viewBox="0 0 13 16"><path d="M3 8V4.500c0-4 7-4 7 0V8" fill="none" stroke="#999" stroke-width="1.700"/><rect y="7" width="13" height="8.500" rx="1" fill="#666"/></svg>
  <span class="lbl">Magnifier</span>
  <div class="field spin"><span>100%</span><em><i class="up"></i><i class="drop"></i></em></div>
  <span class="lbl">Rotation</span>
  <div class="field spin"><span>0.0 °</span><em><i class="up"></i><i class="drop"></i></em></div>
  <svg class="check" viewBox="0 0 14 14"><rect x=".5" y=".5" width="13" height="13" fill="#fff" stroke="#b4b4b4"/><path d="M3.500 6.500l2 4 4.500-7.500" fill="none" stroke="#000" stroke-width="1.900"/></svg>
  <span class="lbl">Render</span>
  <svg class="crs" width="16" height="16" viewBox="0 0 16 16"><path d="M8 1l5 2.500L15.500 8 12 12l-4 3-4-3L.5 8 3 3.500z" fill="#777"/><path d="M1 8h14M3 4.500h10M3.500 11.500h9M8 1v14M5 2c-2 4-2 8 0 11M11 2c2 4 2 8 0 11" fill="none" stroke="#ccc" stroke-width=".8"/></svg>
  <span class="lbl">EPSG:4269</span>
  <svg class="msg" width="16" height="15" viewBox="0 0 16 15"><path d="M8 0c11 0 10 11 5 11l1 4-5-3.500C-3 12-2 0 8 0z" fill="#5c5c5c"/><g fill="#fff"><circle cx="4.500" cy="6" r="1.100"/><circle cx="8" cy="6" r="1.100"/><circle cx="11.500" cy="6" r="1.100"/></g></svg>
</footer>
<div class="edge"><span></span></div>
</body>
</html>
```
FILE: styles.css
```css
* { box-sizing: border-box; }
html, body { margin: 0; height: 100%; }
body {
  display: grid;
  grid-template-rows: 23px 20px 39px 40px 890px 28px 2px;
  width: 1920px;
  height: 1042px;
  overflow: hidden;
  background: #efefef;
  color: #000;
  font: 12px/16px "Open Sans", "Noto Sans", sans-serif;
  letter-spacing: -0.35px;
  white-space: nowrap;
}
.defs { position: absolute; visibility: hidden; }
.ico-t { font: bold 8.500px "DejaVu Sans Condensed", sans-serif; letter-spacing: -0.3px; }

.titlebar { display: flex; align-items: center; background: #fff; padding-left: 2px; }
.logo { width: 16px; height: 16px; margin-top: -1px; }
.title { margin: 1px 0 0 5px; letter-spacing: -0.33px; }
.wctl { margin: -3px 11px 0 auto; }

.menubar {
  display: grid;
  grid-template-columns: 51px 34px 39px 42px 56px 53px 47px 46px 62px 38px 43px 71px 40px;
  padding: 2px 0 0 10px;
  border-bottom: 1px solid #d2d2d2;
}
.menubar u { text-underline-offset: 2px; }

.toolbar {
  display: flex;
  align-items: center;
  background: linear-gradient(#fafafa, #ededed);
  border-bottom: 1px solid #b4b4b4;
}
.toolbar.second { border-bottom-width: 2px; }
.toolbar b { display: flex; position: relative; justify-content: center; align-items: center; flex: none; width: 33px; height: 31px; }
.toolbar b svg { flex: none; width: 24px; height: 24px; overflow: visible; }
.toolbar .on { background: #dcdcdc; border: 1px solid #aaa; border-radius: 3px; }
.toolbar .off svg { opacity: 0.32; }
.grip {
  flex: none;
  width: 16px;
  height: 17px;
  background: radial-gradient(circle, #b0b0b0 0.7px, transparent 0.9px) 8.500px 0 / 3px 3px;
  background-clip: content-box;
  padding: 0 2.500px 0 8.500px;
}
.grip.first { width: 12.500px; padding: 0 3.500px 0 5px; }
.sep { flex: none; width: 7px; height: 19px; background: linear-gradient(#d0d0d0, #d0d0d0) 3px 0 / 1px 100% no-repeat; }
.drop { display: flex; justify-content: center; flex: none; width: 10px; margin: 0 2px 0 0; }
.drop::before { content: ""; border: 4px solid transparent; border-top-color: #666; border-bottom: 0; }
.drop.dim::before { border-top-color: #aaa; }
.corner { position: absolute; right: 4px; bottom: 3px; border: 3px solid transparent; border-top-color: #999; border-bottom: 0; }

.work { display: grid; grid-template-columns: 236px 6px 1fr; }
.docks { display: grid; grid-template-rows: 414px 7px 469px; }
.dock { display: grid; grid-template-rows: 17px 32px 1fr; }
.dock-head { display: flex; justify-content: space-between; padding: 1px 1px 0 4px; align-items: center; }
.layers .dock-head { padding-top: 1px; }
.dock-tools { display: flex; align-items: center; gap: 9px; padding: 0 8px 0; }
.layers .dock-tools { padding-top: 1px; }
.dock-tools svg { width: 16px; height: 16px; }
.dock-tools .drop { width: 12px; margin: 0 -2px 0 -5px; }
.tree { margin: 0; padding: 1px 0 0; list-style: none; background: #fff; border: 1px solid #b9b9b9; }
.tree li { display: flex; align-items: center; height: 18px; padding-left: 23px; }
.tree li svg { width: 16px; height: 16px; margin-right: 6px; }
.tree .wide { letter-spacing: -0.15px; }
.tree .tight { letter-spacing: -0.42px; }
.exp::before { content: ""; width: 0; margin: 0 11px 0 -16px; border: 4px solid transparent; border-left: 5px solid #666; border-right: 0; }
.layer { display: flex; align-items: center; height: 18px; padding-left: 23px; background: linear-gradient(90deg, #efefef 230px, #e2e2e2 230px); }
.check { width: 14px; height: 14px; }
.swatch { width: 16px; height: 16px; margin: 0 6px; background: #74747f; border: 1px solid #3c506b; }
.layer-name { font-weight: bold; text-decoration: underline; letter-spacing: -0.5px; }
.hsplit { background: radial-gradient(circle, #aaa 0.7px, transparent 0.9px) 0 0 / 3px 3px; background-clip: content-box; padding: 1px 109px 3px 111px; }
.vsplit { background: radial-gradient(circle, #aaa 0.7px, transparent 0.9px) 0 0 / 3px 3px; background-clip: content-box; padding: 438px 1px 435px 2px; }
.canvas { background: #fff; border: 1px solid #b9b9b9; border-top: 0; overflow: hidden; }
.canvas svg { display: block; }

.status {
  display: grid;
  grid-template-columns: 200px 928px 57px 86px 32px 29px 80px 33px 48px 88px 59px 84px 24px 54px 18px 72px 17px;
  align-items: center;
  padding: 1px 0 0 4px;
  font: 11px/14px "DejaVu Sans Condensed", "DejaVu Sans", sans-serif;
  letter-spacing: -0.25px;
}
.field { display: flex; align-items: center; height: 22px; background: #fff; border: 1px solid #b0b0b0; border-radius: 3px; }
.locate { color: #777; padding-left: 8px; letter-spacing: -0.1px; }
.locate span { margin-left: 6px; }
.ready { padding-left: 7px; }
.coord { padding-left: 6px; }
.field.coord { letter-spacing: 0; }
.mouse { margin-left: 4px; }
.scale, .spin { justify-content: space-between; padding-left: 4px; }
.scale em, .spin em { display: flex; flex-direction: column; align-items: center; justify-content: center; gap: 3px; width: 20px; height: 20px; border-left: 1px solid #b0b0b0; }
.status .drop { margin: 0; }
.spin em { width: 14px; height: 18px; }
.spin { height: 20px; }
.up { border: 4px solid transparent; border-bottom-color: #666; border-top: 0; }
.spin + .lbl { padding-left: 8px; }
.lock { margin-left: 13px; }
.status .check { margin-left: 6px; }
.msg { margin-left: 1px; }
.edge { background: #05070f; padding-left: 441px; }
.edge span { display: block; width: 48px; height: 2px; background: #35363c; }
```
